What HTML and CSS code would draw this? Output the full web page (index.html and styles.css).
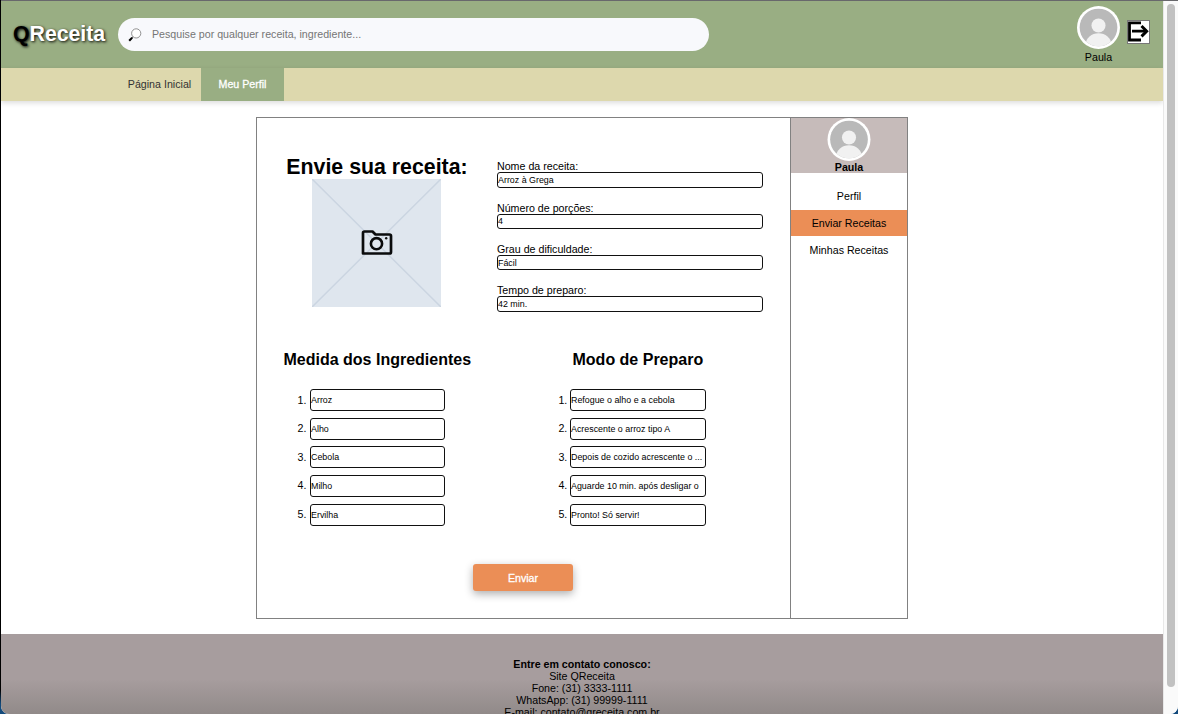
FILE: index.html
```html
<!DOCTYPE html>
<html lang="pt-BR">
<head>
<meta charset="utf-8">
<title>QReceita</title>
<link rel="stylesheet" href="styles.css">
</head>
<body>
<svg class="defs" width="0" height="0">
  <symbol id="avatar" viewBox="0 0 44 44">
    <clipPath id="face"><circle cx="22" cy="22" r="19.3"/></clipPath>
    <circle cx="22" cy="22" r="22" fill="#fff"/>
    <circle cx="22" cy="22" r="19.3" fill="#b9b9b9"/>
    <g clip-path="url(#face)" fill="#f1f1f1"><circle cx="22" cy="20" r="7.2"/><ellipse cx="22" cy="39" rx="13" ry="11"/></g>
  </symbol>
</svg>
<div class="window">
  <div class="page">
    <header class="header">
      <div class="logo"><span class="logo-q">Q</span>Receita</div>
      <div class="search">
        <svg class="lens" viewBox="0 0 14 14"><circle cx="8.2" cy="5.4" r="4.6" fill="#fff" stroke="#777" stroke-width=".8"/><path d="M5 8.8 3.9 9.9" stroke="#555" stroke-width="1"/><path d="M4.2 9.6 1.2 12.8" stroke="#000" stroke-width="2.1"/></svg>
        <span class="placeholder">Pesquise por qualquer receita, ingrediente...</span>
      </div>
      <div class="account">
        <svg class="account-avatar"><use href="#avatar"/></svg>
        <span class="account-name">Paula</span>
      </div>
      <svg class="exit" viewBox="0 0 23 24"><rect x=".5" y=".5" width="22" height="23" fill="#fff" stroke="#777"/><path d="M14 2.8H2.500V20H14" fill="none" stroke="#000" stroke-width="2.8"/><path d="M5 11.2H20" stroke="#000" stroke-width="2.7"/><path d="M14.500 6 19.700 11.2 14.500 16.400" fill="none" stroke="#000" stroke-width="2.9"/></svg>
    </header>
    <nav class="nav">
      <a class="tab"><span class="tab-home">Página Inicial</span></a>
      <a class="tab tab-active"><span class="tab-profile">Meu Perfil</span></a>
    </nav>
    <main class="panel">
      <form class="recipe">
        <section class="top">
          <div class="intro">
            <h1>Envie sua receita:</h1>
            <svg class="photo" viewBox="0 0 129 128"><rect width="129" height="128" fill="#dfe6ee"/><path d="M0 0 129 128M129 0 0 128" stroke="#cbd5e1" stroke-width="1.5"/><path d="M51 74.5V54Q51 52.5 52.500 52.5H60.500L63.500 55.500H77.500Q79 55.500 79 57V73Q79 74.5 77.500 74.5H52.500Q51 74.5 51 73Z" fill="none" stroke="#0a0b0c" stroke-width="2.7" stroke-linejoin="round"/><circle cx="64.500" cy="64.700" r="5.600" fill="#dfe6ee" stroke="#0a0b0c" stroke-width="2.6"/><circle cx="74.200" cy="59.200" r="1.200" fill="#111"/></svg>
          </div>
          <div class="fields">
            <label class="field"><span>Nome da receita:</span><input value="Arroz à Grega"></label>
            <label class="field"><span>Número de porções:</span><input value="4"></label>
            <label class="field"><span>Grau de dificuldade:</span><input value="Fácil"></label>
            <label class="field"><span>Tempo de preparo:</span><input value="42 min."></label>
          </div>
        </section>
        <section class="lists">
          <div class="column">
            <h2 class="h-ingredients">Medida dos Ingredientes</h2>
            <div class="steps">
              <label><span>1.</span><input value="Arroz"></label>
              <label><span>2.</span><input value="Alho"></label>
              <label><span>3.</span><input value="Cebola"></label>
              <label><span>4.</span><input value="Milho"></label>
              <label><span>5.</span><input value="Ervilha"></label>
            </div>
          </div>
          <div class="column column-method">
            <h2 class="h-method">Modo de Preparo</h2>
            <div class="steps">
              <label><span>1.</span><input value="Refogue o alho e a cebola"></label>
              <label><span>2.</span><input value="Acrescente o arroz tipo A"></label>
              <label><span>3.</span><input value="Depois de cozido acrescente o ..."></label>
              <label><span>4.</span><input value="Aguarde 10 min. após desligar o"></label>
              <label><span>5.</span><input value="Pronto! Só servir!"></label>
            </div>
          </div>
        </section>
        <button class="send" type="button">Enviar</button>
      </form>
      <aside class="side">
        <div class="side-user"><svg class="side-avatar"><use href="#avatar"/></svg><b>Paula</b></div>
        <a class="side-link">Perfil</a>
        <a class="side-link side-active">Enviar Receitas</a>
        <a class="side-link side-last">Minhas Receitas</a>
      </aside>
    </main>
    <footer class="footer">
      <b>Entre em contato conosco:</b>
      <span>Site QReceita</span>
      <span>Fone: (31) 3333-1111</span>
      <span>WhatsApp: (31) 99999-1111</span>
      <span>E-mail: contato@qreceita.com.br</span>
    </footer>
  </div>
  <div class="scrollbar"><div class="thumb"></div></div>
</div>
</body>
</html>
```
FILE: styles.css
```css
* { box-sizing: border-box; }
body { margin: 0; height: 714px; overflow: hidden; background: linear-gradient(#000 0 690px, #124a7c 704px); font: 10.67px/12px "Liberation Sans", Arial, sans-serif; color: #000; }
.defs { position: absolute; }
.window { display: flex; height: 714px; margin-left: 1px; border-top: 1px solid #68686c; border-radius: 0 0 8px 8px; overflow: hidden; background: #fff; }
.page { width: 1162px; height: 713px; overflow: hidden; display: flex; flex-direction: column; }
.header { height: 67px; flex: none; display: flex; align-items: flex-start; background: #99ae83; }
.logo { width: 117px; padding: 21px 0 0 12px; font-size: 21.33px; line-height: 24px; font-weight: bold; letter-spacing: -0.05px; color: #fff; text-shadow: 1px 1px 3px #000; white-space: nowrap; }
.logo-q { color: #000; }
.search { width: 591px; height: 33px; margin-top: 17px; border-radius: 17px; background: #f8f9fc; display: flex; align-items: center; padding-left: 10px; }
.lens { width: 14px; height: 14px; margin-right: 10px; }
.placeholder { color: #757575; padding-bottom: 1px; }
.account { width: 43px; margin: 5px 0 0 368px; display: flex; flex-direction: column; align-items: center; }
.account-avatar { width: 43px; height: 43px; display: block; flex: none; }
.account-name { margin-top: 2px; }
.exit { width: 23px; height: 24px; margin: 19px 0 0 7px; }
.nav { height: 33px; flex: none; display: flex; background: #ddd8ad; padding-left: 117px; box-shadow: 0 2px 5px rgba(0,0,0,.14); }
.tab { width: 83px; display: flex; align-items: center; justify-content: center; padding-bottom: 1px; color: #333; white-space: nowrap; }
.tab-active { background: #99ae83; color: #fff; -webkit-text-stroke: .3px #fff; }
.panel { width: 652px; height: 502px; flex: none; margin: 16px 0 15px 255px; border: 1px solid #818181; display: flex; background: #fff; }
.recipe { width: 533px; }
.top { display: flex; height: 218px; }
.intro { width: 240px; padding-top: 37px; display: flex; flex-direction: column; align-items: center; }
h1, h2 { margin: 0; white-space: nowrap; }
h1 { font-size: 21.33px; line-height: 24px; }
.photo { width: 129px; height: 128px; flex: none; margin-right: 1px; }
.fields { padding-top: 42.33px; width: 266px; }
.field { display: block; height: 41.33px; }
.field span { display: block; height: 12px; }
input { display: block; border: 1px solid #111; border-radius: 3px; padding: 0; margin: 0; background: #fff; color: #000; font: 8.89px "Liberation Sans", Arial, sans-serif; }
.field input { width: 266px; height: 15.33px; }
.lists { display: flex; height: 228px; }
.column { width: 261px; padding-left: 39px; }
.h-ingredients, .h-method { font-size: 16px; line-height: 20px; margin: 14px 0 19px -12.5px; }
.column-method { padding-left: 40px; }
.h-method { margin-left: 14.5px; }
.steps label { display: flex; align-items: center; height: 22px; margin-bottom: 6.67px; }
.steps span { width: 14px; flex: none; padding: 0 0 1px 1.5px; }
.steps input { width: 135px; height: 22px; }
.column-method .steps span { width: 12px; padding-left: 0.4px; }
.column-method .steps input { width: 136px; }
.send { display: block; width: 100px; height: 27px; margin: 0 0 0 216px; border: 0; border-radius: 3px; background: #eb8e56; color: #fff; font: 10.67px "Liberation Sans", Arial, sans-serif; -webkit-text-stroke: .3px #fff; box-shadow: 0 3px 9px rgba(0,0,0,.32); }
.side { width: 117px; border-left: 1px solid #818181; text-align: center; }
.side-user { height: 55px; margin-bottom: 10px; background: #c6bbba; display: flex; flex-direction: column; align-items: center; }
.side-avatar { width: 44px; height: 43px; flex: none; }
.side-link { display: block; height: 27px; line-height: 27px; }
.side-active { height: 26px; background: #eb8e56; }
.side-last { margin-top: 1px; }
.footer { flex: 1; min-height: 0; overflow: hidden; padding-top: 24px; display: flex; flex-direction: column; align-items: center; background: linear-gradient(#a79d9e 0 45px, #918a89); }
.footer b, .footer span { flex: none; }
.scrollbar { width: 15px; border-left: 1px solid #e8e8e8; background: #fafafa; padding: 3px 0 0 3px; }
.thumb { width: 8px; height: 683px; border-radius: 4px; background: #c1c1c1; }
```
